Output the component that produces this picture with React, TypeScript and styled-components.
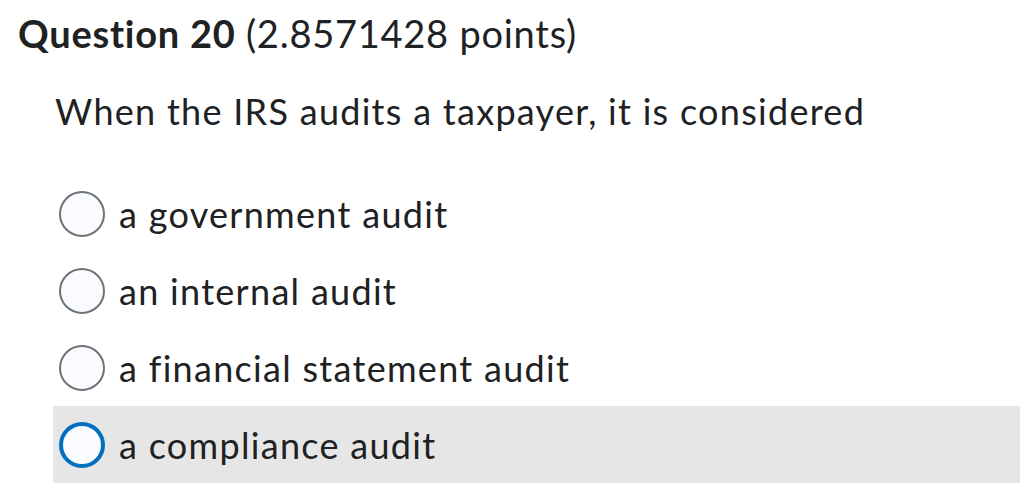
import * as React from 'react';
import styled, { createGlobalStyle } from 'styled-components';

const Global = createGlobalStyle`
  html, body {
    margin: 0;
    padding: 0;
    background: #ffffff;
  }
  body {
    font-family: Lato, "Noto Sans", sans-serif;
    color: #202122;
    font-variant-ligatures: none;
  }
`;

const Page = styled.div`
  width: 1020px;
  height: 499px;
  overflow: hidden;
  box-sizing: border-box;
  padding: 8px 0 0 18px;
`;

const Heading = styled.h2`
  margin: 0;
  font-size: 38px;
  line-height: 50px;
  font-weight: 400;
  letter-spacing: 0.75px;
  color: #202122;
`;

const Strong = styled.span`
  font-weight: 700;
`;

const Prompt = styled.p`
  margin: 29px 0 0 37px;
  font-size: 36px;
  line-height: 48px;
  letter-spacing: 1.28px;
`;

const Options = styled.div`
  margin: 40px 0 0 35px;
  display: flex;
  flex-direction: column;
`;

const Option = styled.label<{ $hover?: boolean }>`
  display: flex;
  align-items: center;
  gap: 14px;
  height: 77px;
  padding-left: 6px;
  background: ${(p) => (p.$hover ? '#e6e6e6' : 'transparent')};
  font-size: 36px;
  letter-spacing: 1.3px;
  cursor: pointer;
`;

const Radio = styled.span<{ $focus?: boolean }>`
  box-sizing: border-box;
  width: 46px;
  height: 46px;
  border-radius: 50%;
  background: #f9fbff;
  border: ${(p) => (p.$focus ? '4px solid #006fbf' : '2px solid #6e7376')};
  flex-shrink: 0;
`;

const choices = [
  'a government audit',
  'an internal audit',
  'a financial statement audit',
  'a compliance audit',
];

export default function App() {
  return (
    <Page>
      <Global />
      <Heading>
        <Strong>Question 20</Strong> (2.8571428 points)
      </Heading>
      <Prompt>When the IRS audits a taxpayer, it is considered</Prompt>
      <Options>
        {choices.map((c, i) => (
          <Option key={c} $hover={i === 3}>
            <Radio $focus={i === 3} />
            <span>{c}</span>
          </Option>
        ))}
      </Options>
    </Page>
  );
}
